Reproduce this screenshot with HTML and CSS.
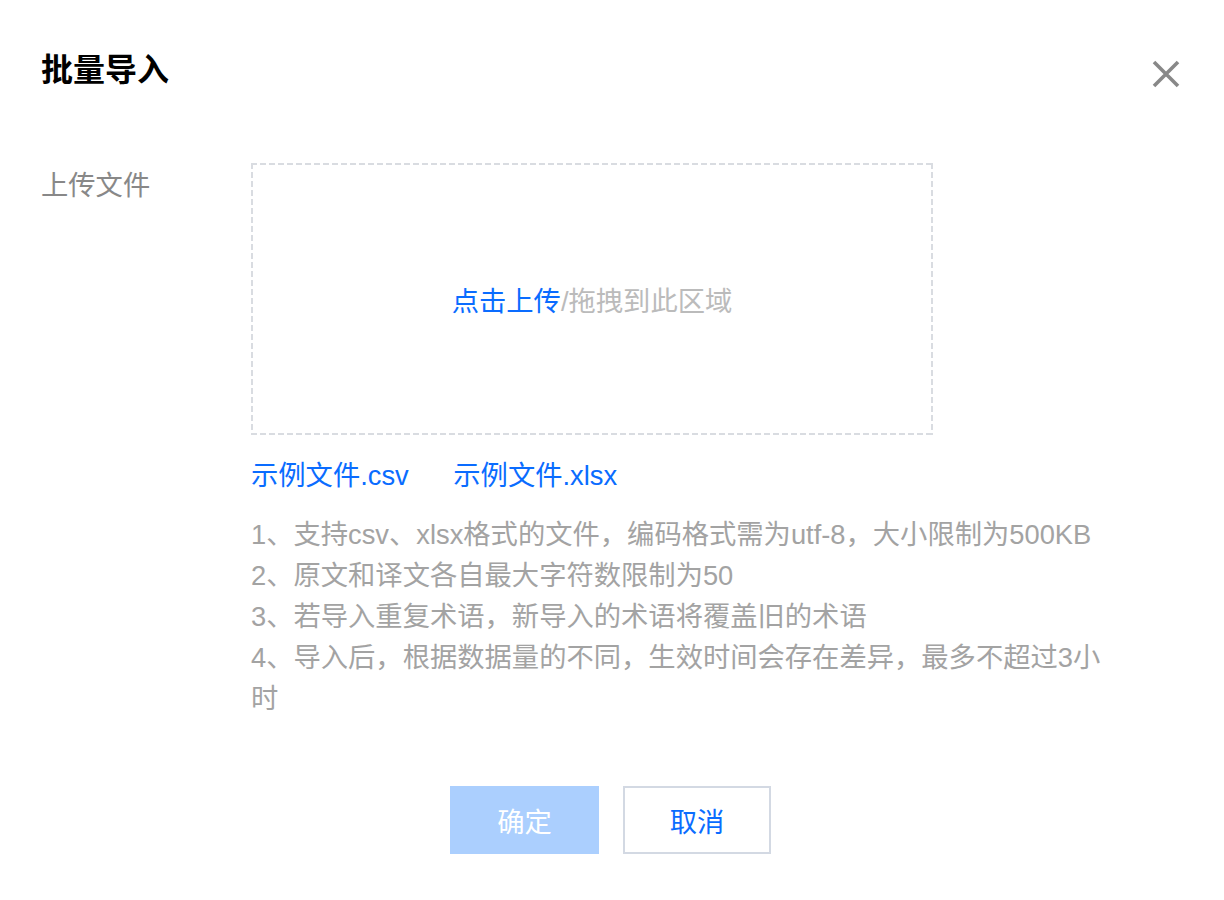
FILE: index.html
```html
<!DOCTYPE html>
<html lang="zh-CN">
<head>
    <meta charset="UTF-8">
    <meta name="viewport" content="width=device-width, initial-scale=1.0">
    <title>批量导入</title>
    <link rel="stylesheet" href="styles.css">
</head>
<body>
    <div class="dialog">
        <div class="dialog-header">
            <h3 class="dialog-title">批量导入</h3>
            <button class="close-btn" aria-label="关闭">
                <svg width="28" height="28" viewBox="0 0 28 28">
                    <path d="M2 2 L26 26 M26 2 L2 26" stroke="#888" stroke-width="3.6" fill="none"/>
                </svg>
            </button>
        </div>
        <div class="form-row">
            <div class="form-label">上传文件</div>
            <div class="form-control">
                <div class="upload-area">
                    <span class="upload-link">点击上传</span><span class="upload-tip">/拖拽到此区域</span>
                </div>
                <div class="sample-links">
                    <a href="#">示例文件.csv</a>
                    <a href="#">示例文件.xlsx</a>
                </div>
                <div class="notes">
                    <p>1、支持csv、xlsx格式的文件，编码格式需为utf-8，大小限制为500KB</p>
                    <p>2、原文和译文各自最大字符数限制为50</p>
                    <p>3、若导入重复术语，新导入的术语将覆盖旧的术语</p>
                    <p>4、导入后，根据数据量的不同，生效时间会存在差异，最多不超过3小时</p>
                </div>
            </div>
        </div>
        <div class="dialog-footer">
            <button class="btn btn-primary" disabled>确定</button>
            <button class="btn btn-default">取消</button>
        </div>
    </div>
</body>
</html>
```

FILE: styles.css
```css
body {
    margin: 0;
    background: #fff;
    font-family: "Liberation Sans", Arial, "Noto Sans CJK SC", sans-serif;
    font-size: 27.3px;
    color: #333;
}
.dialog {
    padding: 50px 44px 0 41px;
}
.dialog-header {
    display: flex;
    justify-content: space-between;
    align-items: center;
    height: 40px;
}
.dialog-title {
    margin: 0;
    font-size: 32px;
    font-weight: bold;
    color: #000;
    line-height: 40px;
}
.close-btn {
    border: none;
    background: none;
    padding: 0;
    margin-top: 8px;
    width: 28px;
    height: 28px;
    cursor: pointer;
}
.close-btn svg {
    display: block;
}
.form-row {
    display: flex;
    margin-top: 73px;
}
.form-label {
    width: 210px;
    flex-shrink: 0;
    padding-top: 2px;
    color: #888;
    line-height: 41px;
}
.form-control {
    width: 862px;
}
.upload-area {
    width: 682px;
    height: 272px;
    display: flex;
    align-items: center;
    justify-content: center;
    box-sizing: border-box;
    background:
        repeating-linear-gradient(90deg, #d9dce1 0 6px, transparent 6px 9px) top left / 100% 2px no-repeat,
        repeating-linear-gradient(90deg, #d9dce1 0 6px, transparent 6px 9px) bottom left / 100% 2px no-repeat,
        repeating-linear-gradient(180deg, #d9dce1 0 6px, transparent 6px 9px) top left / 2px 100% no-repeat,
        repeating-linear-gradient(180deg, #d9dce1 0 6px, transparent 6px 9px) top right / 2px 100% no-repeat;
    cursor: pointer;
}
.upload-link {
    color: #0a6cff;
}
.upload-tip {
    color: #bbb;
}
.sample-links {
    margin-top: 20px;
    line-height: 41px;
}
.sample-links a {
    color: #0a6cff;
    text-decoration: none;
    margin-right: 37px;
}
.notes {
    margin-top: 18px;
    color: #a3a3a3;
    line-height: 41px;
}
.notes p {
    margin: 0;
}
.dialog-footer {
    display: flex;
    justify-content: center;
    gap: 24px;
    margin-top: 67px;
}
.btn {
    height: 68px;
    font-family: inherit;
    font-size: 27.3px;
    box-sizing: border-box;
    cursor: pointer;
}
.btn-primary {
    width: 149px;
    background: #abcffe;
    border: 1px solid #abcffe;
    color: #fff;
}
.btn-default {
    width: 148px;
    background: #fff;
    border: 2px solid #d3d9e3;
    color: #0a6cff;
}
```
